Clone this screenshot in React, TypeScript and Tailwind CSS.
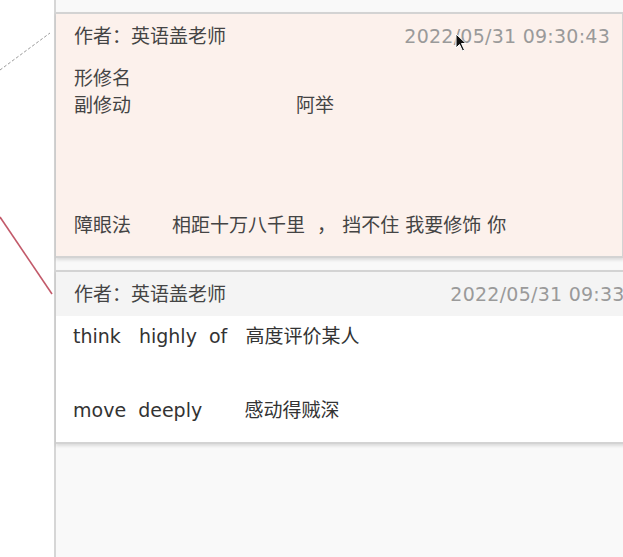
import React from 'react';

const font = { fontFamily: '"DejaVu Sans", "Noto Sans CJK SC", sans-serif' };

const Cursor = () => (
  <svg className="absolute left-[455px] top-[33px]" width="14" height="20" viewBox="0 0 14 20">
    <path d="M1 1 L1 15 L4.5 11.5 L7.5 18 L9.5 17 L6.5 10.5 L11 10.5 Z" fill="#111" stroke="#fff" strokeWidth="1" />
  </svg>
);

const Header = ({ time, tint }: { time: string; tint: string }) => (
  <div className={`flex items-center justify-between h-[44px] pl-[18px] pr-[12px] ${tint}`}>
    <span className="text-[19px] text-[#444]">作者：英语盖老师</span>
    <span className="text-[19px] text-[#9a9a9a] tracking-[0.25px] whitespace-nowrap">{time}</span>
  </div>
);

export default function App() {
  return (
    <div className="relative flex w-[623px] h-[557px] overflow-hidden bg-white" style={font}>
      <div className="w-[54px] shrink-0 bg-white">
        <svg width="54" height="557">
          <line x1="0" y1="70" x2="50" y2="33" stroke="#9a9a9a" strokeWidth="1" strokeDasharray="3 2" />
          <line x1="0" y1="217" x2="52" y2="294" stroke="#c25a6a" strokeWidth="1.6" />
        </svg>
      </div>
      <div className="flex-1 min-w-0 border-l-2 border-[#d6d6d6] bg-[#f9f9f9] pt-[12px]">
        <div className="w-[568px] h-[246px] bg-[#fcf1ec] border-t-2 border-r-2 border-b-2 border-[#d3d3d3] shadow-[0_2px_3px_rgba(0,0,0,0.12)]">
          <Header time="2022/05/31 09:30:43" tint="bg-[#fcf1ec]" />
          <div className="pl-[18px] text-[19px] text-[#444] leading-[27px] whitespace-pre">
            <div className="mt-[7px]">形修名</div>
            <div className="flex">
              <span>副修动</span>
              <span className="ml-[165px]">阿举</span>
            </div>
            <div className="flex mt-[93px]">
              <span>障眼法</span>
              <span className="ml-[41px]">相距十万八千里  ， 挡不住 我要修饰 你</span>
            </div>
          </div>
        </div>
        <div className="mt-[12px] w-[612px] h-[174px] bg-white border-t-2 border-b-2 border-[#d3d3d3] shadow-[0_2px_3px_rgba(0,0,0,0.12)]">
          <Header time="2022/05/31 09:33:12" tint="bg-[#f4f4f4]" />
          <div className="pl-[17px] text-[19px] text-[#333] leading-[27px] whitespace-pre">
            <div className="mt-[7px]">think   highly  of   高度评价某人</div>
            <div className="mt-[47px]">move  deeply       感动得贼深</div>
          </div>
        </div>
      </div>
      <Cursor />
    </div>
  );
}
